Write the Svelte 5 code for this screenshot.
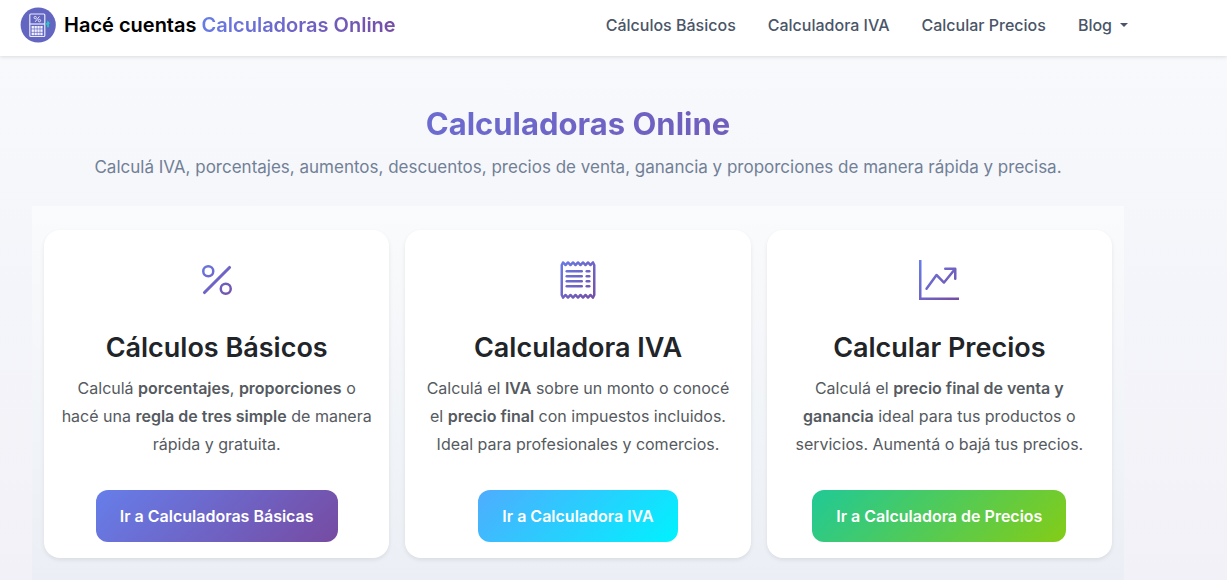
<script>
  const links = [
    { label: "Cálculos Básicos", href: "#basicos" },
    { label: "Calculadora IVA", href: "#iva" },
    { label: "Calcular Precios", href: "#precios" },
  ];

  let blogOpen = $state(false);
</script>

{#snippet gradient(id)}
  <defs>
    <linearGradient {id} gradientUnits="userSpaceOnUse" x1="0" y1="0" x2="16" y2="16">
      <stop offset="0" stop-color="#667eea" />
      <stop offset="1" stop-color="#764ba2" />
    </linearGradient>
  </defs>
{/snippet}

<header class="navbar">
  <div class="container nav-row">
    <a class="brand" href="#inicio">
      <svg class="logo" viewBox="0 0 36 36" aria-hidden="true">
        <circle cx="18.2" cy="18" r="17.6" fill="#6366c0" />
        <g fill="none" stroke="#e9e9fb">
          <rect x="9.8" y="7" width="15" height="22.5" rx="1" stroke-width="1.2" />
          <path d="M9.8 17h15" stroke-width="1.2" />
          <path d="M15.2 14.8l4.2-5.4" stroke-width="1" />
          <circle cx="15.2" cy="10.6" r="1.2" stroke-width="0.9" />
          <circle cx="19.4" cy="13.6" r="1.2" stroke-width="0.9" />
        </g>
        <g fill="#f3f3ff">
          {#each [19, 22.3, 25.6] as y}
            {#each [11.6, 14.5, 17.4, 20.3] as x}
              <rect {x} {y} width="2.3" height="2.6" />
            {/each}
          {/each}
        </g>
        <path d="M27.6 13.4l2.6 3.4h-1.3v3.4h-1.8v-2.4h-1.7v-1.6h1.4z" fill="#22c9c4" />
      </svg>
      <span>Hacé cuentas <span class="gradient-text">Calculadoras Online</span></span>
    </a>
    <nav>
      {#each links as link}
        <a class="nav-link" href={link.href}>{link.label}</a>
      {/each}
      <button
        class="nav-link dropdown"
        aria-expanded={blogOpen}
        onclick={() => (blogOpen = !blogOpen)}
      >
        Blog
      </button>
    </nav>
  </div>
</header>

<main class="container">
  <section class="hero">
    <h1 class="gradient-text">Calculadoras Online</h1>
    <p>
      Calculá IVA, porcentajes, aumentos, descuentos, precios de venta, ganancia y proporciones de
      manera rápida y precisa.
    </p>
  </section>

  <section class="cards">
    <article class="card">
      <svg class="icon" viewBox="0 0 16 16" fill="url(#grad-percent)" aria-hidden="true">
        {@render gradient("grad-percent")}
        <path
          d="M13.442 2.558a.625.625 0 0 1 0 .884l-10 10a.625.625 0 1 1-.884-.884l10-10a.625.625 0 0 1 .884 0M4.5 6a1.5 1.5 0 1 1 0-3 1.5 1.5 0 0 1 0 3m0 1a2.5 2.5 0 1 0 0-5 2.5 2.5 0 0 0 0 5m7 6a1.5 1.5 0 1 1 0-3 1.5 1.5 0 0 1 0 3m0 1a2.5 2.5 0 1 0 0-5 2.5 2.5 0 0 0 0 5"
        />
      </svg>
      <h2>Cálculos Básicos</h2>
      <p>
        Calculá <strong>porcentajes</strong>, <strong>proporciones</strong> o hacé una
        <strong>regla de tres simple</strong> de manera rápida y gratuita.
      </p>
      <a class="btn basic" href="#basicos">Ir a Calculadoras Básicas</a>
    </article>

    <article class="card">
      <svg class="icon" viewBox="0 0 16 16" fill="url(#grad-receipt)" aria-hidden="true">
        {@render gradient("grad-receipt")}
        <path
          d="M1.92.506a.5.5 0 0 1 .434.14L3 1.293l.646-.647a.5.5 0 0 1 .708 0L5 1.293l.646-.647a.5.5 0 0 1 .708 0L7 1.293l.646-.647a.5.5 0 0 1 .708 0L9 1.293l.646-.647a.5.5 0 0 1 .708 0l.646.647.646-.647a.5.5 0 0 1 .708 0l.646.647.646-.647a.5.5 0 0 1 .801.13l.5 1A.5.5 0 0 1 15 2v12a.5.5 0 0 1-.053.224l-.5 1a.5.5 0 0 1-.8.13L13 14.707l-.646.647a.5.5 0 0 1-.708 0L11 14.707l-.646.647a.5.5 0 0 1-.708 0L9 14.707l-.646.647a.5.5 0 0 1-.708 0L7 14.707l-.646.647a.5.5 0 0 1-.708 0L5 14.707l-.646.647a.5.5 0 0 1-.708 0L3 14.707l-.646.647a.5.5 0 0 1-.801-.13l-.5-1A.5.5 0 0 1 1 14V2a.5.5 0 0 1 .053-.224l.5-1a.5.5 0 0 1 .367-.27m.217 1.338L2 2.118v11.764l.137.274.51-.51a.5.5 0 0 1 .707 0l.646.647.646-.646a.5.5 0 0 1 .708 0l.646.646.646-.646a.5.5 0 0 1 .708 0l.646.646.646-.646a.5.5 0 0 1 .708 0l.646.646.646-.646a.5.5 0 0 1 .708 0l.646.646.646-.646a.5.5 0 0 1 .708 0l.509.509.137-.274V2.118l-.137-.274-.51.51a.5.5 0 0 1-.707 0L12 1.707l-.646.647a.5.5 0 0 1-.708 0L10 1.707l-.646.647a.5.5 0 0 1-.708 0L8 1.707l-.646.647a.5.5 0 0 1-.708 0L6 1.707l-.646.647a.5.5 0 0 1-.708 0L4 1.707l-.646.647a.5.5 0 0 1-.708 0z"
        />
        {#each [4, 6, 8, 10] as y}
          <rect x="3" {y} width="7" height="1" rx="0.5" />
          <rect x="11" {y} width="2" height="1" rx="0.5" />
        {/each}
      </svg>
      <h2>Calculadora IVA</h2>
      <p>
        Calculá el <strong>IVA</strong> sobre un monto o conocé el
        <strong>precio final</strong> con impuestos incluidos. Ideal para profesionales y comercios.
      </p>
      <a class="btn iva" href="#iva">Ir a Calculadora IVA</a>
    </article>

    <article class="card">
      <svg class="icon" viewBox="0 0 16 16" fill="url(#grad-graph)" aria-hidden="true">
        {@render gradient("grad-graph")}
        <path
          fill-rule="evenodd"
          d="M0 0h1v15h15v1H0zm10 3.5a.5.5 0 0 1 .5-.5h4a.5.5 0 0 1 .5.5v4a.5.5 0 0 1-1 0V4.9l-3.613 4.417a.5.5 0 0 1-.74.037L7.06 6.767l-3.656 5.027a.5.5 0 0 1-.808-.588l4-5.5a.5.5 0 0 1 .758-.06l2.609 2.61L13.445 4H10.5a.5.5 0 0 1-.5-.5"
        />
      </svg>
      <h2>Calcular Precios</h2>
      <p>
        Calculá el <strong>precio final de venta y ganancia</strong> ideal para tus productos o
        servicios. Aumentá o bajá tus precios.
      </p>
      <a class="btn prices" href="#precios">Ir a Calculadora de Precios</a>
    </article>
  </section>
</main>

<style>
  :global(body) {
    min-height: 100vh;
    font-family: Inter, "Liberation Sans", sans-serif;
    font-size: 16px;
    line-height: 28px;
    color: #212529;
    background: linear-gradient(180deg, #f8fafc 0%, #f4f5fa 50%, #f2f1f7 100%);
  }

  .container {
    box-sizing: border-box;
    max-width: 1140px;
    margin: 0 8px;
  }

  .navbar {
    background: #fff;
    box-shadow: 0 1px 4px rgba(0, 0, 0, 0.12);
  }

  .nav-row {
    display: flex;
    align-items: center;
    justify-content: space-between;
    min-height: 56px;
    padding: 0 12px;
  }

  .brand {
    display: flex;
    align-items: center;
    gap: 8px;
    padding-bottom: 6px;
    font-size: 20px;
    font-weight: 600;
    color: #000;
    text-decoration: none;
  }

  .logo {
    width: 36px;
    height: 36px;
  }

  .gradient-text {
    background: linear-gradient(135deg, #667eea 0%, #764ba2 100%);
    background-clip: text;
    color: transparent;
  }

  nav {
    display: flex;
    padding-bottom: 6px;
  }

  .nav-link {
    padding: 8px 16px;
    font: inherit;
    font-weight: 500;
    color: #4a5568;
    text-decoration: none;
    background: none;
    border: 0;
    cursor: pointer;
  }

  .dropdown {
    display: flex;
    align-items: center;
    gap: 8px;
    padding-right: 8px;
  }

  .dropdown::after {
    content: "";
    border-top: 4px solid;
    border-right: 4px solid transparent;
    border-left: 4px solid transparent;
  }

  main {
    padding: 48px 24px 0;
  }

  .hero {
    text-align: center;
  }

  h1 {
    margin: 0 0 8px;
    font-size: 31px;
    font-weight: 700;
    line-height: 40px;
  }

  .hero p {
    margin: 0 0 24px;
    font-size: 17px;
    line-height: 30px;
    color: #718096;
  }

  .cards {
    display: grid;
    grid-template-columns: repeat(3, 1fr);
    gap: 16px;
    padding: 24px 12px;
    background: linear-gradient(180deg, #fafbfc 0%, #ebeff5 100%);
  }

  .card {
    display: flex;
    flex-direction: column;
    align-items: center;
    padding: 30px 16px 16px;
    text-align: center;
    background: #fff;
    border-radius: 16px;
    box-shadow: 0 2px 4px rgba(0, 0, 0, 0.08);
  }

  .icon {
    width: 40px;
    height: 40px;
    margin-bottom: 30px;
  }

  h2 {
    margin: 0 0 8px;
    font-size: 27px;
    font-weight: 600;
    line-height: 36px;
  }

  .card p {
    margin: 0 0 32px;
    color: #555a60;
  }

  strong {
    font-weight: 600;
  }

  .btn {
    margin-top: auto;
    padding: 12px 24px;
    font-weight: 600;
    color: #fff;
    text-decoration: none;
    border-radius: 12px;
  }

  .basic {
    background: linear-gradient(135deg, #667eea 0%, #764ba2 100%);
  }

  .iva {
    background: linear-gradient(135deg, #4facfe 0%, #00f2fe 100%);
  }

  .prices {
    background: linear-gradient(135deg, #20c997 0%, #84cc16 100%);
  }

  @media (max-width: 900px) {
    .cards {
      grid-template-columns: 1fr;
    }

    .nav-row {
      flex-wrap: wrap;
    }
  }
</style>
